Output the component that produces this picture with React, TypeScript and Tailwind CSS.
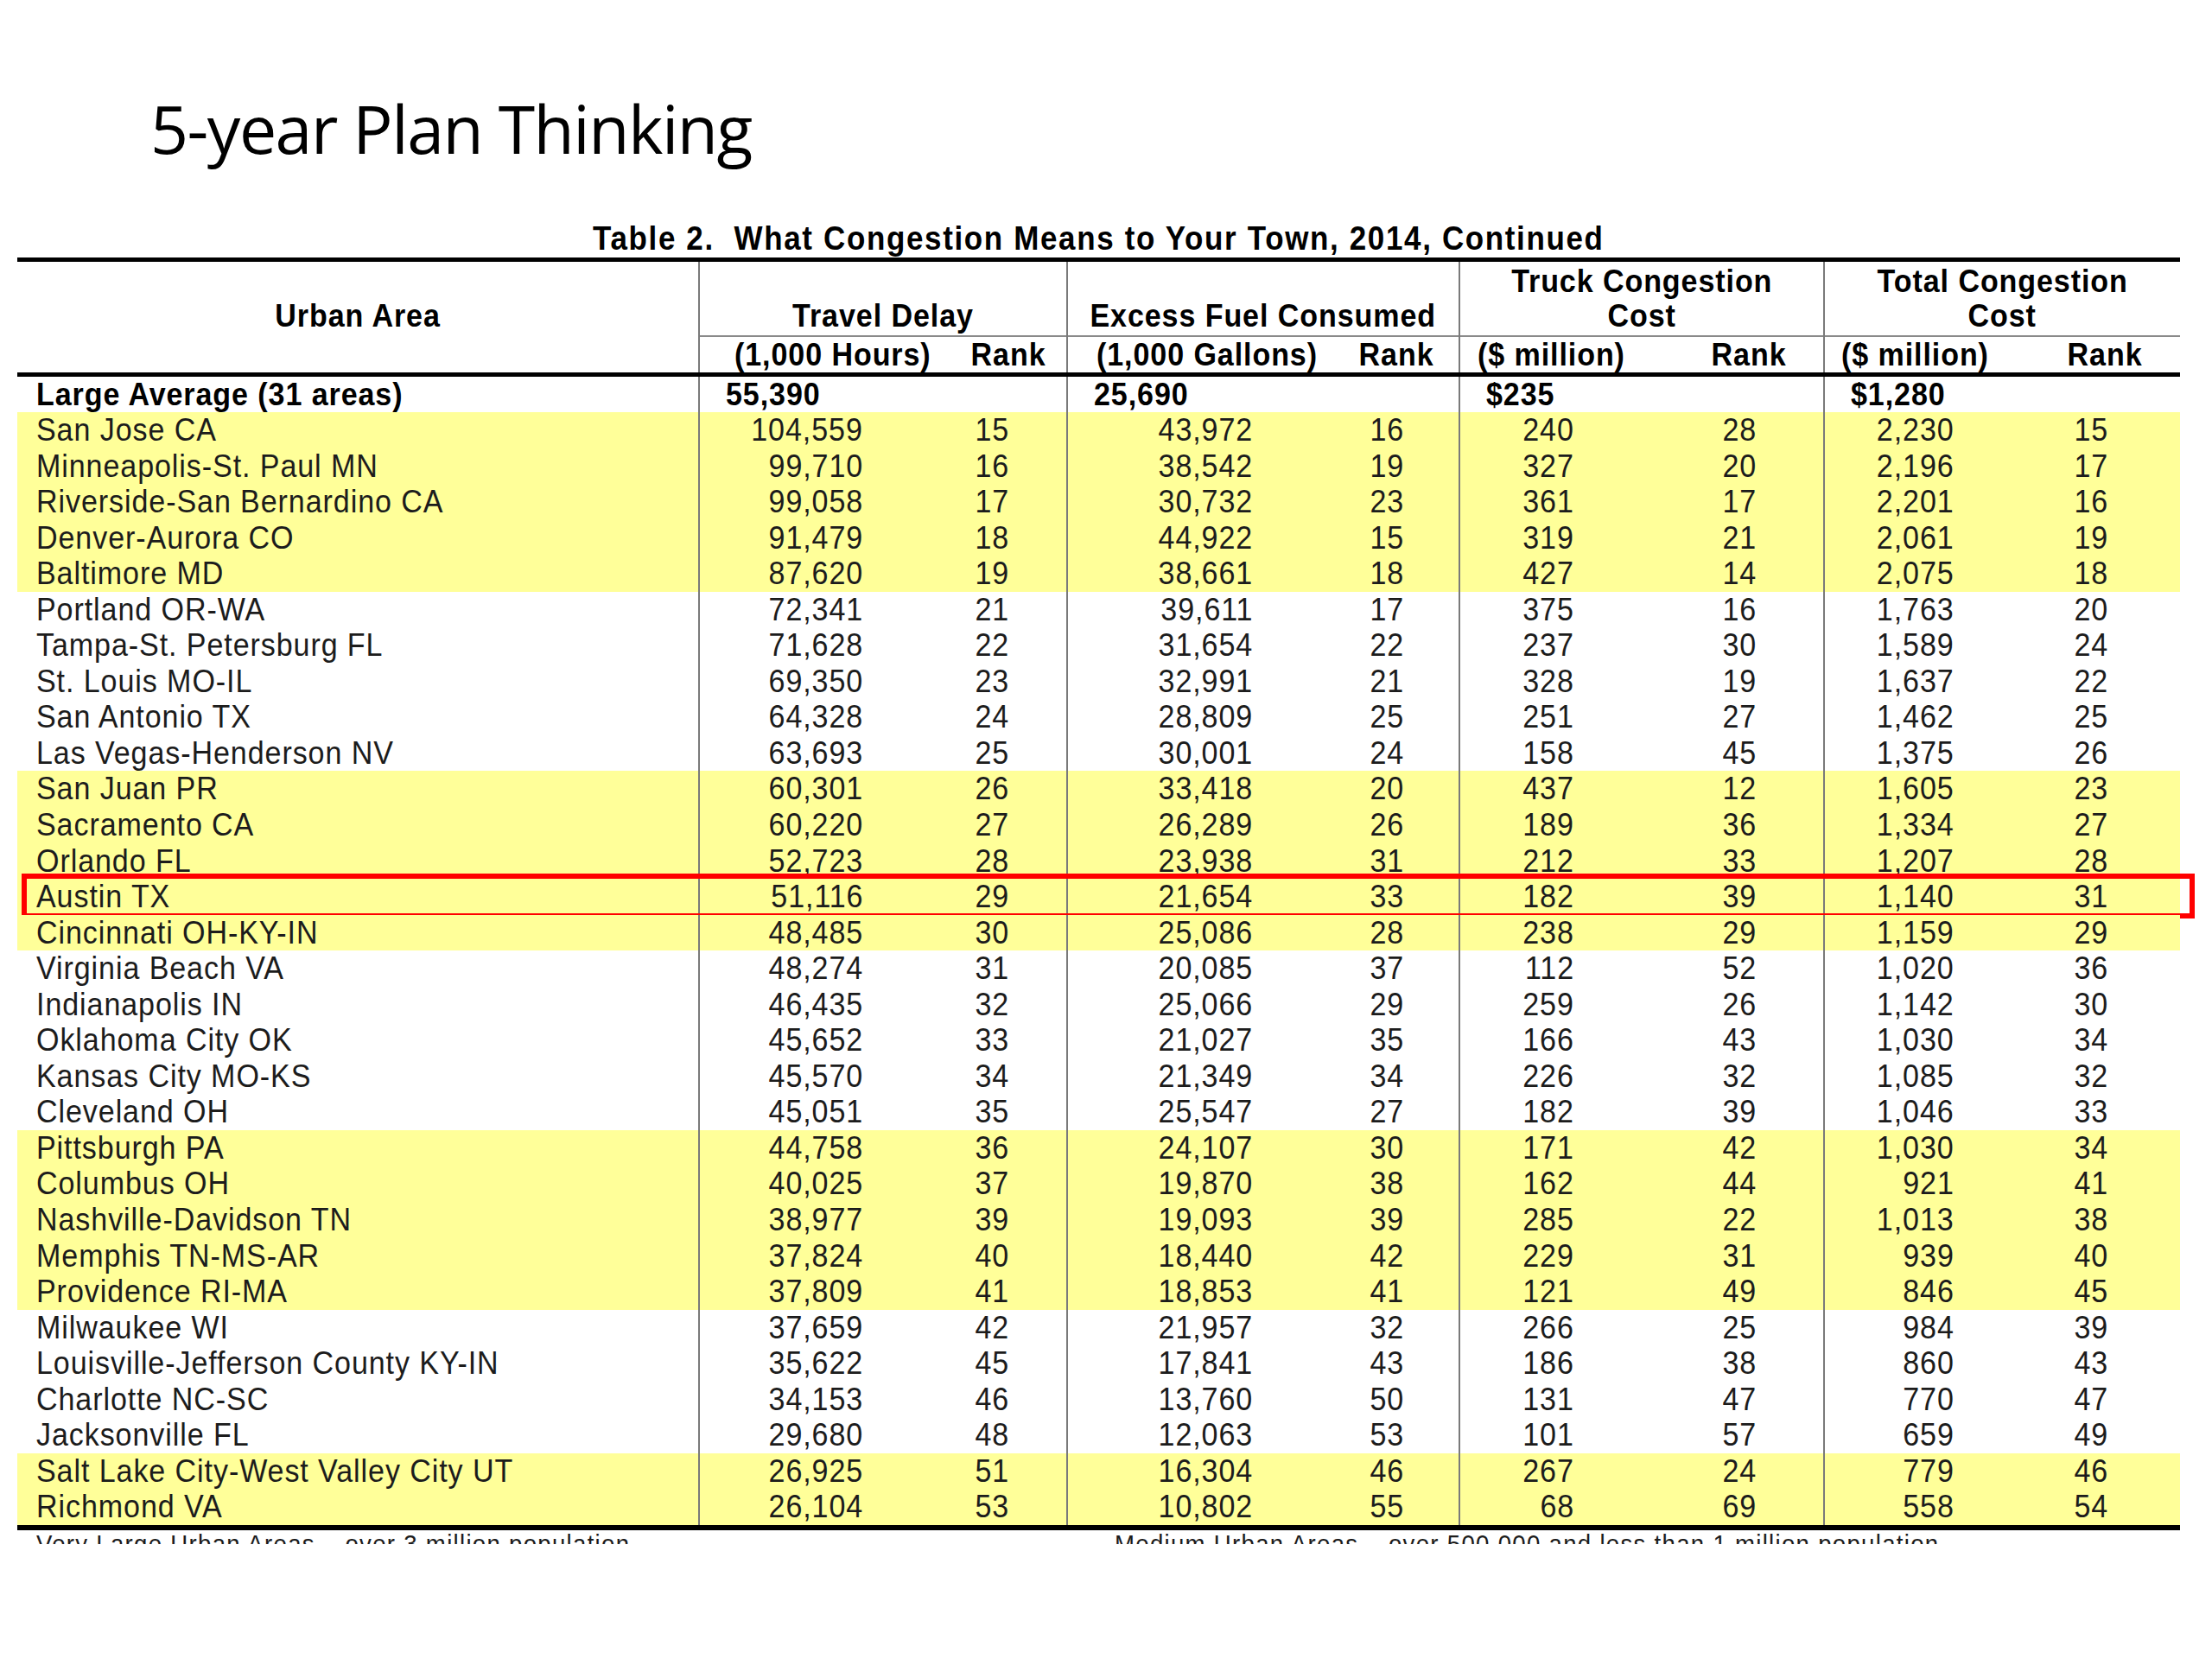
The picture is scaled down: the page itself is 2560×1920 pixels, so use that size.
import type { ReactNode } from 'react'

type Row = [string, string, string, string, string, string, string, string, string]

const rows: Row[] = [
  ['San Jose CA', '104,559', '15', '43,972', '16', '240', '28', '2,230', '15'],
  ['Minneapolis-St. Paul MN', '99,710', '16', '38,542', '19', '327', '20', '2,196', '17'],
  ['Riverside-San Bernardino CA', '99,058', '17', '30,732', '23', '361', '17', '2,201', '16'],
  ['Denver-Aurora CO', '91,479', '18', '44,922', '15', '319', '21', '2,061', '19'],
  ['Baltimore MD', '87,620', '19', '38,661', '18', '427', '14', '2,075', '18'],
  ['Portland OR-WA', '72,341', '21', '39,611', '17', '375', '16', '1,763', '20'],
  ['Tampa-St. Petersburg FL', '71,628', '22', '31,654', '22', '237', '30', '1,589', '24'],
  ['St. Louis MO-IL', '69,350', '23', '32,991', '21', '328', '19', '1,637', '22'],
  ['San Antonio TX', '64,328', '24', '28,809', '25', '251', '27', '1,462', '25'],
  ['Las Vegas-Henderson NV', '63,693', '25', '30,001', '24', '158', '45', '1,375', '26'],
  ['San Juan PR', '60,301', '26', '33,418', '20', '437', '12', '1,605', '23'],
  ['Sacramento CA', '60,220', '27', '26,289', '26', '189', '36', '1,334', '27'],
  ['Orlando FL', '52,723', '28', '23,938', '31', '212', '33', '1,207', '28'],
  ['Austin TX', '51,116', '29', '21,654', '33', '182', '39', '1,140', '31'],
  ['Cincinnati OH-KY-IN', '48,485', '30', '25,086', '28', '238', '29', '1,159', '29'],
  ['Virginia Beach VA', '48,274', '31', '20,085', '37', '112', '52', '1,020', '36'],
  ['Indianapolis IN', '46,435', '32', '25,066', '29', '259', '26', '1,142', '30'],
  ['Oklahoma City OK', '45,652', '33', '21,027', '35', '166', '43', '1,030', '34'],
  ['Kansas City MO-KS', '45,570', '34', '21,349', '34', '226', '32', '1,085', '32'],
  ['Cleveland OH', '45,051', '35', '25,547', '27', '182', '39', '1,046', '33'],
  ['Pittsburgh PA', '44,758', '36', '24,107', '30', '171', '42', '1,030', '34'],
  ['Columbus OH', '40,025', '37', '19,870', '38', '162', '44', '921', '41'],
  ['Nashville-Davidson TN', '38,977', '39', '19,093', '39', '285', '22', '1,013', '38'],
  ['Memphis TN-MS-AR', '37,824', '40', '18,440', '42', '229', '31', '939', '40'],
  ['Providence RI-MA', '37,809', '41', '18,853', '41', '121', '49', '846', '45'],
  ['Milwaukee WI', '37,659', '42', '21,957', '32', '266', '25', '984', '39'],
  ['Louisville-Jefferson County KY-IN', '35,622', '45', '17,841', '43', '186', '38', '860', '43'],
  ['Charlotte NC-SC', '34,153', '46', '13,760', '50', '131', '47', '770', '47'],
  ['Jacksonville FL', '29,680', '48', '12,063', '53', '101', '57', '659', '49'],
  ['Salt Lake City-West Valley City UT', '26,925', '51', '16,304', '46', '267', '24', '779', '46'],
  ['Richmond VA', '26,104', '53', '10,802', '55', '68', '69', '558', '54'],
]

const yellow = new Set([0, 1, 2, 3, 4, 10, 11, 12, 13, 14, 20, 21, 22, 23, 24, 29, 30])

const groups = [
  { title: ['Travel Delay'], unit: '(1,000 Hours)', avg: '55,390', vw: 'w-[189px]', rw: 'w-[169px]', sub: 'pl-[40px] pr-[24px]' },
  { title: ['Excess Fuel Consumed'], unit: '(1,000 Gallons)', avg: '25,690', vw: 'w-[214px]', rw: 'w-[175px]', sub: 'pl-[33px] pr-[29px]' },
  { title: ['Truck Congestion', 'Cost'], unit: '($ million)', avg: '$235', vw: 'w-[132px]', rw: 'w-[211px]', sub: 'pl-[20px] pr-[43px]' },
  { title: ['Total Congestion', 'Cost'], unit: '($ million)', avg: '$1,280', vw: 'w-[150px]', rw: 'w-[178px]', sub: 'pl-[19px] pr-[44px]' },
]

const cols = 'grid grid-cols-[788px_426px_454px_422px_413px]'
const vline = 'border-l-2 border-[#7a7a7a]'

// the scan is a bit condensed: tall Arial squeezed sideways
function N({ children, o = 'origin-left' }: { children: ReactNode; o?: string }) {
  return <span className={`inline-block whitespace-nowrap scale-x-[0.92] ${o}`}>{children}</span>
}

function Header() {
  return (
    <div className={`${cols} font-bold text-black`}>
      <div className="flex flex-col">
        <div className="flex h-[85px] flex-col items-center justify-end pb-[2px] leading-[40px]">
          <N o="origin-center">Urban Area</N>
        </div>
        <div className="h-[43px]" />
      </div>
      {groups.map((g) => (
        <div key={g.unit + g.title[0]} className={`flex flex-col ${vline}`}>
          <div className="flex h-[85px] flex-col items-center justify-end pb-[2px] leading-[40px]">
            {g.title.map((t) => (
              <N key={t} o="origin-center">{t}</N>
            ))}
          </div>
          <div className={`flex h-[43px] justify-between border-t-2 border-[#8a8a8a] leading-[41px] ${g.sub}`}>
            <N>{g.unit}</N>
            <N o="origin-right">Rank</N>
          </div>
        </div>
      ))}
    </div>
  )
}

function DataRow({ r, i }: { r: Row; i: number }) {
  return (
    <div className={`${cols} relative h-[41.55px] leading-[41.55px] ${yellow.has(i) ? 'bg-[#ffff99]' : ''}`}>
      <div className="pl-[22px]">
        <N>{r[0]}</N>
      </div>
      {groups.map((g, k) => (
        <div key={k} className={`flex ${vline}`}>
          <div className={`${g.vw} text-right`}>
            <N o="origin-right">{r[1 + k * 2]}</N>
          </div>
          <div className={`${g.rw} text-right`}>
            <N o="origin-right">{r[2 + k * 2]}</N>
          </div>
        </div>
      ))}
      {r[0] === 'Austin TX' && (
        <div className="absolute -top-[6px] left-[5px] -right-[17px] h-[52px] border-[6px] border-[#ff0000]" />
      )}
    </div>
  )
}

export default function App() {
  return (
    <div className="h-[1920px] w-[2560px] overflow-hidden bg-white">
      <h1 className="pl-[174px] pt-[110px] font-['Open_Sans',sans-serif] text-[77px] leading-[77px] tracking-[-1.5px] text-black">
        5-year Plan Thinking
      </h1>

      <div className="font-['Liberation_Sans',Arial,sans-serif] text-[37px] tracking-[1px] text-[#1c1c1c]">
        <div className="mt-[69px] pl-[686px] text-[38px] font-bold leading-[40px] tracking-[1.8px] text-black">
          <N>
            <span className="whitespace-pre">{'Table 2.  What Congestion Means to Your Town, 2014, Continued'}</span>
          </N>
        </div>

        <div className="ml-[20px] mt-[2px] w-[2503px]">
          <div className="h-[5px] bg-black" />
          <Header />
          <div className="h-[5px] bg-black" />

          <div className={`${cols} h-[41px] font-bold leading-[41px] text-black`}>
            <div className="pl-[22px]">
              <N>Large Average (31 areas)</N>
            </div>
            {groups.map((g) => (
              <div key={g.avg} className={`pl-[30px] ${vline}`}>
                <N>{g.avg}</N>
              </div>
            ))}
          </div>

          {rows.map((r, i) => (
            <DataRow key={r[0]} r={r} i={i} />
          ))}

          <div className="h-[6px] bg-black" />

          <div className="flex h-[16px] overflow-hidden pt-[2px] text-[30px] leading-[28px] tracking-[1.4px]">
            <div className="w-[1270px] shrink-0 pl-[22px]">
              <N>Very Large Urban Areas – over 3 million population</N>
            </div>
            <div>
              <N>Medium Urban Areas – over 500,000 and less than 1 million population</N>
            </div>
          </div>
        </div>
      </div>
    </div>
  )
}
